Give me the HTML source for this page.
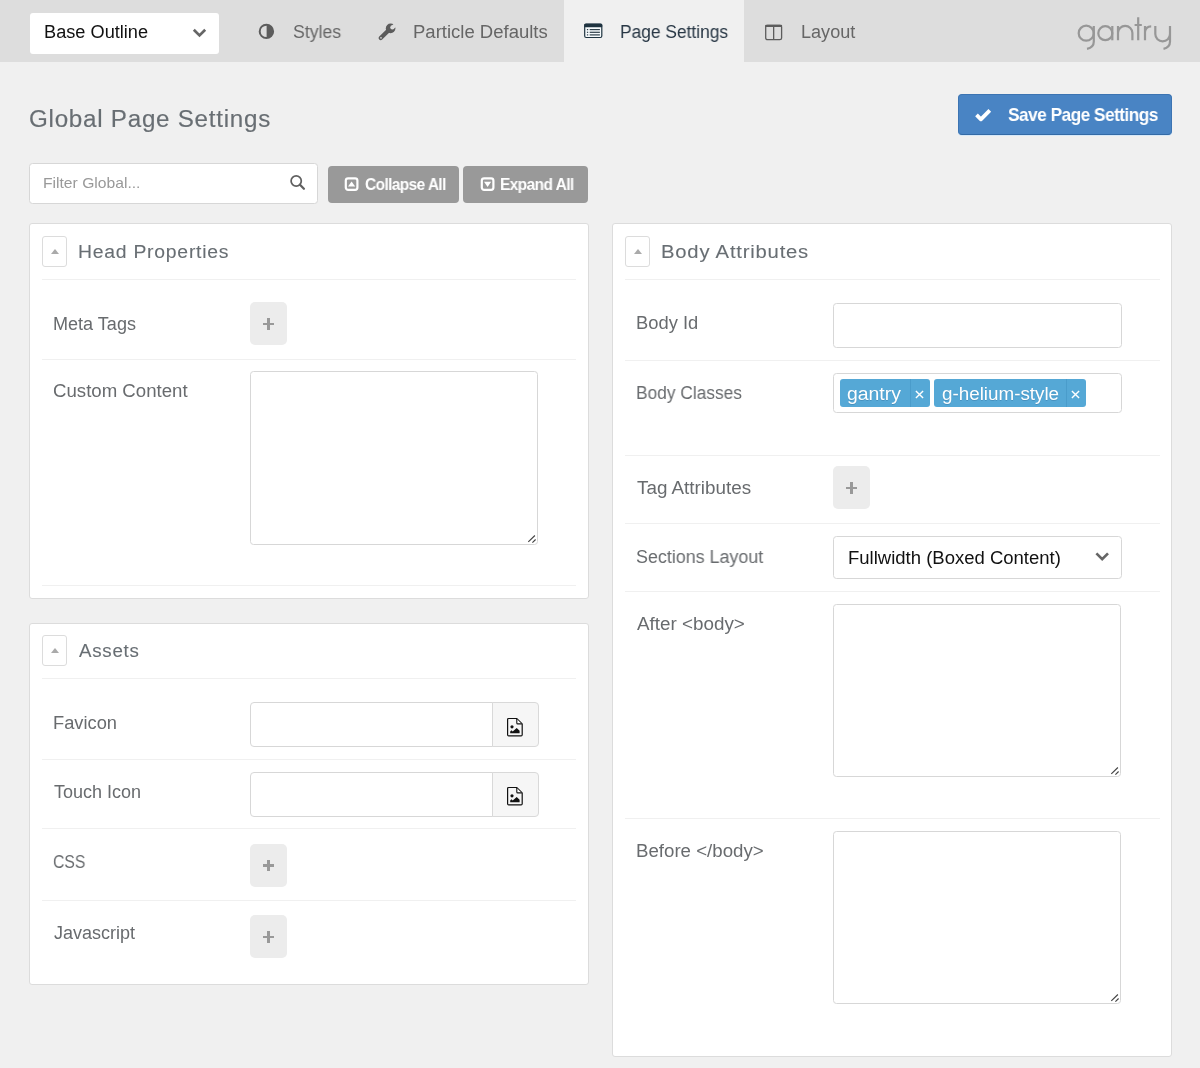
<!DOCTYPE html>
<html>
<head>
<meta charset="utf-8">
<title>Global Page Settings</title>
<style>
*{box-sizing:border-box;margin:0;padding:0}
html,body{width:1200px;height:1068px;overflow:hidden}
body{background:#f0f0f0;font-family:"Liberation Sans",sans-serif;position:relative;color:#666}
.abs{position:absolute}
.t{position:absolute;white-space:nowrap;line-height:20px;height:20px;will-change:transform}
#topbar{left:0;top:0;width:1200px;height:62px;background:#dddddd}
#tabactive{left:564px;top:0;width:180px;height:62px;background:#f0f0f0}
#outline{left:30px;top:12.5px;width:189px;height:41.5px;background:#fff;border-radius:3px}
.nav{font-size:18px;color:#666}
.lbl{font-size:18px;color:#686b6e}
.ttl{font-size:18px;color:#686e73;letter-spacing:.7px;-webkit-text-stroke:.1px #6b7278}
.card{position:absolute;background:#fff;border:1px solid #dcdcdc;border-radius:3px}
.sep{position:absolute;height:1px;background:#f0f0f0}
.tog{position:absolute;width:25px;height:31px;background:#fff;border:1px solid #dcdcdc;border-radius:3px}
.tog:after{content:"";position:absolute;left:7.5px;top:12px;border-left:4px solid transparent;border-right:4px solid transparent;border-bottom:5px solid #aaa}
.inp{position:absolute;background:#fff;border:1px solid #d7d7d7;border-radius:3.5px}
.plus{position:absolute;width:37px;height:43px;background:#ececec;border-radius:5px}
.plus:before{content:"";position:absolute;left:12.7px;top:20.6px;width:11.4px;height:2.8px;background:#999}
.plus:after{content:"";position:absolute;left:17px;top:16.2px;width:2.8px;height:11.6px;background:#999}
.gbtn{position:absolute;background:#999;border-radius:4px;height:37px}
.gbtn .t{color:#fff;font-weight:bold;font-size:16px}
.tag{position:absolute;top:378.6px;height:28px;background:#55a8d6;border-radius:3px}
.tag .t{color:#fff;font-size:18px;top:5.2px;text-shadow:0 1px 0 rgba(0,40,80,.18)}
.tag i{position:absolute;top:0;width:1px;height:28px;background:#4a9ccb}
.fbtn{position:absolute;width:47px;height:44px;background:#f6f6f6;border:1px solid #d9d9d9;border-radius:0 4px 4px 0}
</style>
</head>
<body>
<!-- top bar -->
<div class="abs" id="topbar"></div>
<div class="abs" id="tabactive"></div>
<div class="abs" id="outline"></div>
<span class="t" id="t_base" style="left:43.5px;top:22px;font-size:18px;color:#111;transform-origin:0 0;transform:scaleX(1.010)">Base Outline</span>
<svg class="abs" style="left:190px;top:26px" width="20" height="14" viewBox="0 0 20 14"><path d="M3.8 3.7 L9.5 9.4 L15.2 3.7" fill="none" stroke="#666" stroke-width="2.7"/></svg>

<!-- nav icons -->
<svg class="abs" style="left:257px;top:22px" width="19" height="19" viewBox="0 0 19 19"><circle cx="9.4" cy="9.4" r="6.7" fill="none" stroke="#5c5c5c" stroke-width="2"/><path d="M9.6 2.7 A6.7 6.7 0 0 1 9.6 16.1 Z" fill="#5c5c5c"/></svg>
<span class="t nav" id="t_styles" style="left:293px;top:22px;transform-origin:0 0;transform:scaleX(0.982)">Styles</span>

<svg class="abs" style="left:376px;top:21px" width="24" height="22" viewBox="0 0 24 22"><path d="M4.7 17.1 L12.4 9.5" stroke="#5c5c5c" stroke-width="4.2" stroke-linecap="round" fill="none"/><circle cx="14.6" cy="7.4" r="4.8" fill="#5c5c5c"/><circle cx="16.4" cy="6.4" r="2.15" fill="#ddd"/><path d="M16.4 6.4 L22.4 1.6" stroke="#ddd" stroke-width="3.7" fill="none"/><circle cx="5" cy="16.8" r=".85" fill="#ddd"/></svg>
<span class="t nav" id="t_particle" style="left:413px;top:22px;transform-origin:0 0;transform:scaleX(1.028)">Particle Defaults</span>

<svg class="abs" style="left:583px;top:22px" width="21" height="18" viewBox="0 0 21 18"><rect x="1.7" y="2.2" width="17.1" height="13.3" rx="1.5" fill="#f7fbfd" stroke="#1f3340" stroke-width="1.2"/><rect x="1.2" y="1.7" width="18.1" height="3.6" rx="1.2" fill="#1f3340"/><g fill="#30404b"><rect x="3.9" y="7" width="1.3" height="1.2"/><rect x="3.9" y="9.7" width="1.3" height="1.2"/><rect x="3.9" y="12.3" width="1.3" height="1.2"/><rect x="6.7" y="7" width="10.2" height="1.2"/><rect x="6.7" y="9.7" width="10.2" height="1.2"/><rect x="6.7" y="12.3" width="10.2" height="1.2"/></g></svg>
<span class="t nav" id="t_page" style="left:620px;top:22px;color:#273644;transform-origin:0 0;transform:scaleX(0.965)">Page Settings</span>

<svg class="abs" style="left:764px;top:22.5px" width="20" height="19" viewBox="0 0 20 19"><rect x="1.7" y="2.3" width="15.9" height="14.4" rx="1.8" fill="none" stroke="#5c5c5c" stroke-width="1.3"/><rect x="1.1" y="1.7" width="17.1" height="2.4" rx="1.2" fill="#5c5c5c"/><rect x="9" y="3" width="1.3" height="13.5" fill="#5c5c5c"/></svg>
<span class="t nav" id="t_layout" style="left:800.5px;top:22px;transform-origin:0 0;transform:scaleX(1.004)">Layout</span>

<!-- gantry logo -->
<svg class="abs" style="left:1070px;top:10px" width="110" height="45" viewBox="1070 10 110 45"><g fill="none" stroke="#979797" stroke-width="2.2">
<circle cx="1086.2" cy="33.2" r="7.5"/><path d="M1093.8 26 V41.5 Q1093.8 47.5 1087 48.8"/>
<circle cx="1105.3" cy="33.2" r="7"/><path d="M1112.3 26 V40.3"/>
<path d="M1118 26 V40.3 M1118 33 A7.2 7.2 0 0 1 1132.4 33 V40.3"/>
<path d="M1138.2 17.3 V40.3 M1134.6 25 H1141.8"/>
<path d="M1145 26 V40.3 M1145 32 Q1145.5 26.3 1151.2 26.3"/>
<path d="M1155.3 26 V34 A7.35 7.35 0 0 0 1170 34 M1170 26 V41.5 Q1170 47.5 1163.5 48.8"/>
</g></svg>

<!-- title + save -->
<span class="t" id="t_global" style="-webkit-text-stroke:.15px #686e73;left:29px;top:105.5px;font-size:23px;line-height:26px;height:26px;color:#686e73;letter-spacing:.7px;transform-origin:0 0;transform:scaleX(1.052)">Global Page Settings</span>
<div class="abs" style="left:958px;top:94px;width:214px;height:41px;background:#4984c4;border:1px solid #3c74b2;border-bottom-color:#336aa6;border-radius:4px;box-shadow:0 1px 0 #d6e8f8"></div>
<svg class="abs" style="left:973px;top:106px" width="21" height="18" viewBox="0 0 21 18"><path d="M3.5 8.9 L7.9 13.3 L16.8 4.4" fill="none" stroke="#fff" stroke-width="3.8" stroke-linejoin="round"/></svg>
<span class="t" id="t_save" style="left:1008px;top:105px;font-size:19px;font-weight:bold;color:#fff;letter-spacing:-.6px;transform-origin:0 0;transform:scaleX(0.911)">Save Page Settings</span>

<!-- filter row -->
<div class="inp" style="left:29px;top:163px;width:289px;height:41px"></div>
<span class="t" id="t_filter" style="left:43px;top:173px;font-size:15px;color:#999;transform-origin:0 0;transform:scaleX(1.044)">Filter Global...</span>
<svg class="abs" style="left:288px;top:173px" width="20" height="20" viewBox="0 0 20 20"><circle cx="8.2" cy="8" r="5.1" fill="none" stroke="#606060" stroke-width="1.75"/><path d="M12 11.8 L15.9 15.7" stroke="#606060" stroke-width="2.3" stroke-linecap="round"/></svg>

<div class="gbtn" style="left:328px;top:165.5px;width:131px">
 <svg class="abs" style="left:15px;top:10px" width="18" height="18" viewBox="0 0 18 18"><rect x="2.8" y="2.3" width="11.6" height="11.6" rx="2.3" fill="none" stroke="#fff" stroke-width="2.2"/><path d="M5 10.6 L8.6 5.4 L12.2 10.6 Z" fill="#fff"/></svg>
 <span class="t" id="t_collapse" style="left:36.5px;top:9.5px;letter-spacing:-.6px;transform-origin:0 0;transform:scaleX(0.964)">Collapse All</span>
</div>
<div class="gbtn" style="left:463px;top:165.5px;width:125px">
 <svg class="abs" style="left:15.5px;top:10px" width="18" height="18" viewBox="0 0 18 18"><rect x="2.8" y="2.3" width="11.6" height="11.6" rx="2.3" fill="none" stroke="#fff" stroke-width="2.2"/><path d="M5 5.8 L8.6 11 L12.2 5.8 Z" fill="#fff"/></svg>
 <span class="t" id="t_expand" style="left:37px;top:9.5px;letter-spacing:-.6px;transform-origin:0 0;transform:scaleX(0.967)">Expand All</span>
</div>

<!-- Head Properties card -->
<div class="card" style="left:29px;top:223px;width:560px;height:376px"></div>
<div class="tog" style="left:42px;top:236px"></div>
<span class="t ttl" id="t_head" style="left:78px;top:242px;transform-origin:0 0;transform:scaleX(1.076)">Head Properties</span>
<div class="sep" style="left:42px;top:279px;width:534px"></div>
<span class="t lbl" id="t_meta" style="left:53px;top:314px;transform-origin:0 0;transform:scaleX(1.003)">Meta Tags</span>
<div class="plus" style="left:250px;top:302px"></div>
<div class="sep" style="left:42px;top:359px;width:534px"></div>
<span class="t lbl" id="t_custom" style="left:52.5px;top:381px;transform-origin:0 0;transform:scaleX(1.035)">Custom Content</span>
<div class="inp" id="ta1" style="left:250px;top:371px;width:288px;height:173.5px"></div>
<svg class="abs" style="left:525px;top:532px" width="12" height="12" viewBox="0 0 12 12"><path d="M3.3 9.9 L9.9 3.5 M7.4 10.6 L10.6 7.5" stroke="#444" stroke-width="1.15"/></svg>
<div class="sep" style="left:42px;top:585px;width:534px"></div>

<!-- Assets card -->
<div class="card" style="left:29px;top:623px;width:560px;height:362px"></div>
<div class="tog" style="left:42px;top:635px"></div>
<span class="t ttl" id="t_assets" style="left:79px;top:641px;transform-origin:0 0;transform:scaleX(1.040)">Assets</span>
<div class="sep" style="left:42px;top:678px;width:534px"></div>
<span class="t lbl" id="t_fav" style="left:53px;top:713px;transform-origin:0 0;transform:scaleX(1.016)">Favicon</span>
<div class="inp" style="left:250px;top:702px;width:243px;height:45px;border-radius:4px 0 0 4px"></div>
<div class="fbtn" style="left:492px;top:702px;height:45px"></div>
<svg class="abs" style="left:505px;top:715.6px" width="20" height="22" viewBox="0 0 20 22"><path d="M3.7 2.5 H11.6 L17.2 8 V18.8 Q17.2 19.9 16.1 19.9 H3.7 Q2.6 19.9 2.6 18.8 V3.6 Q2.6 2.5 3.7 2.5 Z" fill="none" stroke="#111" stroke-width="1.2" stroke-linejoin="round"/><path d="M11.8 2.9 V6.9 Q11.8 7.9 12.8 7.9 H16.8" fill="#fff" stroke="#111" stroke-width="1.1"/><circle cx="7" cy="10.8" r="1.6" fill="#111"/><path d="M5.2 17.3 V15.6 L6.5 14.3 L7.7 15.4 L11.7 12 L14.6 14.8 V17.3 Z" fill="#111"/></svg>
<div class="sep" style="left:42px;top:759px;width:534px"></div>
<span class="t lbl" id="t_touch" style="left:54px;top:782px;transform-origin:0 0;transform:scaleX(0.997)">Touch Icon</span>
<div class="inp" style="left:250px;top:772px;width:243px;height:45px;border-radius:4px 0 0 4px"></div>
<div class="fbtn" style="left:492px;top:772px;height:45px"></div>
<svg class="abs" style="left:505px;top:785.4px" width="20" height="22" viewBox="0 0 20 22"><path d="M3.7 2.5 H11.6 L17.2 8 V18.8 Q17.2 19.9 16.1 19.9 H3.7 Q2.6 19.9 2.6 18.8 V3.6 Q2.6 2.5 3.7 2.5 Z" fill="none" stroke="#111" stroke-width="1.2" stroke-linejoin="round"/><path d="M11.8 2.9 V6.9 Q11.8 7.9 12.8 7.9 H16.8" fill="#fff" stroke="#111" stroke-width="1.1"/><circle cx="7" cy="10.8" r="1.6" fill="#111"/><path d="M5.2 17.3 V15.6 L6.5 14.3 L7.7 15.4 L11.7 12 L14.6 14.8 V17.3 Z" fill="#111"/></svg>
<div class="sep" style="left:42px;top:828px;width:534px"></div>
<span class="t lbl" id="t_css" style="left:53px;top:851.5px;transform-origin:0 0;transform:scaleX(0.874)">CSS</span>
<div class="plus" style="left:250px;top:843.5px"></div>
<div class="sep" style="left:42px;top:900px;width:534px"></div>
<span class="t lbl" id="t_js" style="left:54px;top:923px;transform-origin:0 0;transform:scaleX(0.997)">Javascript</span>
<div class="plus" style="left:250px;top:915px"></div>

<!-- Body Attributes card -->
<div class="card" style="left:612px;top:223px;width:560px;height:834px"></div>
<div class="tog" style="left:625px;top:236px"></div>
<span class="t ttl" id="t_body" style="left:661px;top:242px;transform-origin:0 0;transform:scaleX(1.125)">Body Attributes</span>
<div class="sep" style="left:625px;top:279px;width:535px"></div>
<span class="t lbl" id="t_bid" style="left:636px;top:313px;transform-origin:0 0;transform:scaleX(1.019)">Body Id</span>
<div class="inp" style="left:833px;top:303px;width:289px;height:45px"></div>
<div class="sep" style="left:625px;top:360px;width:535px"></div>
<span class="t lbl" id="t_bcl" style="left:636px;top:383px;transform-origin:0 0;transform:scaleX(0.963)">Body Classes</span>
<div class="inp" style="left:833px;top:373px;width:289px;height:39.5px"></div>
<div class="tag" style="left:840px;width:90px"><span class="t" id="t_tag1" style="left:7px;transform-origin:0 0;transform:scaleX(1.078)">gantry</span><i style="left:70px"></i>
 <svg class="abs" style="left:74px;top:10px" width="11" height="11" viewBox="0 0 11 11"><path d="M1.9 1.9 L9.1 9.1 M9.1 1.9 L1.9 9.1" stroke="#fff" stroke-width="1.4"/></svg></div>
<div class="tag" style="left:934px;width:152px"><span class="t" id="t_tag2" style="left:7.5px;transform-origin:0 0;transform:scaleX(1.045)">g-helium-style</span><i style="left:132px"></i>
 <svg class="abs" style="left:136px;top:10px" width="11" height="11" viewBox="0 0 11 11"><path d="M1.9 1.9 L9.1 9.1 M9.1 1.9 L1.9 9.1" stroke="#fff" stroke-width="1.4"/></svg></div>
<div class="sep" style="left:625px;top:455px;width:535px"></div>
<span class="t lbl" id="t_tagattr" style="left:637px;top:478px;transform-origin:0 0;transform:scaleX(1.046)">Tag Attributes</span>
<div class="plus" style="left:833px;top:466px"></div>
<div class="sep" style="left:625px;top:523px;width:535px"></div>
<span class="t lbl" id="t_sect" style="left:636px;top:546.5px;transform-origin:0 0;transform:scaleX(0.994)">Sections Layout</span>
<div class="inp" style="left:833px;top:536px;width:289px;height:43px"></div>
<span class="t" id="t_full" style="left:848px;top:548px;font-size:18px;color:#111;transform-origin:0 0;transform:scaleX(1.028)">Fullwidth (Boxed Content)</span>
<svg class="abs" style="left:1092px;top:550.4px" width="20" height="14" viewBox="0 0 20 14"><path d="M4.4 3.4 L10.2 9.2 L16 3.4" fill="none" stroke="#666" stroke-width="2.7"/></svg>
<div class="sep" style="left:625px;top:591px;width:535px"></div>
<span class="t lbl" id="t_after" style="left:636.5px;top:614px;transform-origin:0 0;transform:scaleX(1.046)">After &lt;body&gt;</span>
<div class="inp" id="ta2" style="left:833px;top:604px;width:288px;height:173px"></div>
<svg class="abs" style="left:1108px;top:764.4px" width="12" height="12" viewBox="0 0 12 12"><path d="M3.3 9.9 L9.9 3.5 M7.4 10.6 L10.6 7.5" stroke="#444" stroke-width="1.15"/></svg>
<div class="sep" style="left:625px;top:818px;width:535px"></div>
<span class="t lbl" id="t_before" style="left:635.5px;top:841px;transform-origin:0 0;transform:scaleX(1.037)">Before &lt;/body&gt;</span>
<div class="inp" id="ta3" style="left:833px;top:831px;width:288px;height:172.6px"></div>
<svg class="abs" style="left:1108px;top:991.2px" width="12" height="12" viewBox="0 0 12 12"><path d="M3.3 9.9 L9.9 3.5 M7.4 10.6 L10.6 7.5" stroke="#444" stroke-width="1.15"/></svg>
</body>
</html>
